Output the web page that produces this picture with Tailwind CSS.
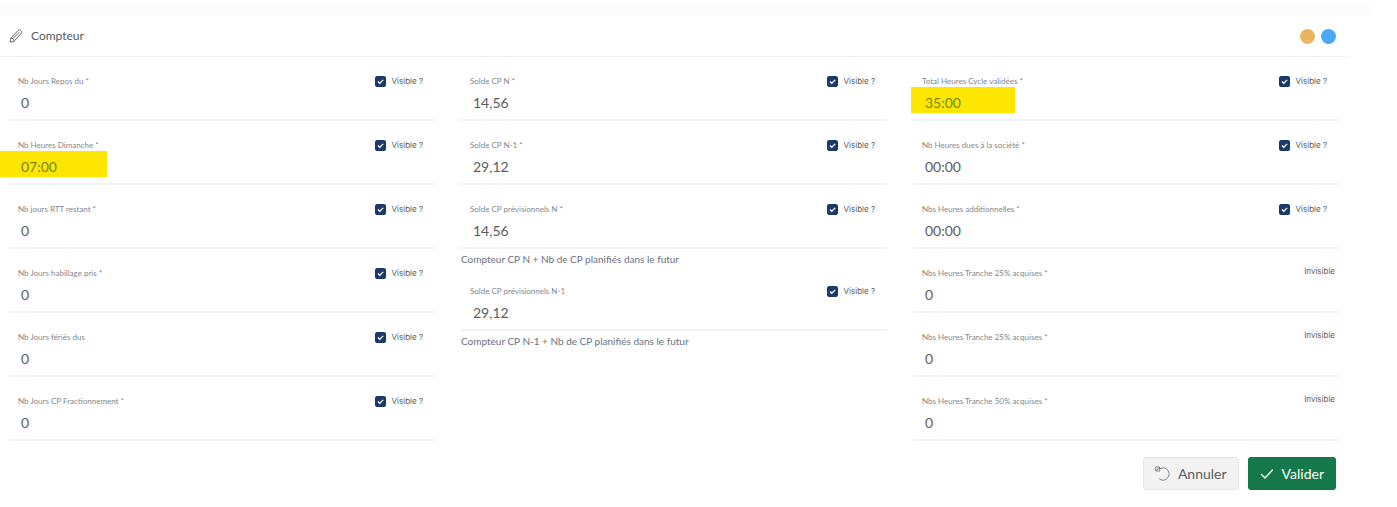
<!DOCTYPE html>
<html lang="fr">
  <head>
    <meta charset="UTF-8" />
    <meta name="viewport" content="width=device-width, initial-scale=1.0" />
    <script src="https://cdn.jsdelivr.net/npm/@tailwindcss/browser@4"></script>
    <title>Compteur</title>
  </head>

  <body class="bg-white font-['Lato',sans-serif] text-[#5a5d63]">
    <div class="mt-[5px] mr-[26px] h-[11px] bg-[#fcfcfc]"></div>

    <form class="mr-[50px]">
      <header class="flex h-[41px] items-center justify-between border-b border-[#f0f0f0] pr-[11px] pl-[9px]">
        <h1 class="flex items-center gap-2 text-[12px]">
          <svg class="size-[14px]" viewBox="0 0 14 14" fill="none" stroke="#6b6e73" stroke-linejoin="round" stroke-linecap="round">
            <path d="M1.200 12.800 2 9 9 1.600c.9-.9 2.200-.8 3 0s.9 2.100 0 3L5.200 12z M2 9c1.700 0 3.100 1.300 3.200 3 M4.200 9.400 10 3.600" />
          </svg>
          Compteur
        </h1>
        <div class="flex gap-[6px]">
          <span class="size-[15px] rounded-full bg-[#e8b563]"></span>
          <span class="size-[15px] rounded-full bg-[#4aa8f7]"></span>
        </div>
      </header>

      <div id="counters" class="grid grid-cols-3 items-start gap-[26px] pr-2 pl-[9px]"></div>

      <footer class="flex justify-end gap-[9px] pt-4 pr-[11px]">
        <button type="button" class="flex h-[33px] items-center gap-2 rounded-[3px] border border-[#e6e6e6] bg-[#f3f3f3] px-[11px] text-sm">
          <svg class="size-[15px]" viewBox="0 0 15 15" fill="none" stroke="#808388">
            <path d="M5 2.800A6 6 0 1 1 4.200 12.700" />
            <path d="M.8.800v4.200h4.200M1 1h3.500v3.500M1 5 4.500 1.200" />
          </svg>
          Annuler
        </button>
        <button type="submit" class="flex h-[33px] items-center gap-2 rounded-[3px] bg-[#15784a] px-3 text-sm text-white">
          <svg class="size-[14px]" viewBox="0 0 14 14" fill="none" stroke="currentColor" stroke-width="1.3" stroke-linecap="round" stroke-linejoin="round">
            <path d="M1.500 7.500 5 11l7.500-8" />
          </svg>
          Valider
        </button>
      </footer>
    </form>

    <script>
      const columns = [
        [
          { label: 'Nb Jours Repos du *', value: '0' },
          { label: 'Nb Heures Dimanche *', value: '07:00', mark: '-left-[9px] w-[107px]' },
          { label: 'Nb jours RTT restant *', value: '0' },
          { label: 'Nb Jours habillage pris *', value: '0' },
          { label: 'Nb Jours fériés dus', value: '0' },
          { label: 'Nb Jours CP Fractionnement *', value: '0' },
        ],
        [
          { label: 'Solde CP N *', value: '14,56' },
          { label: 'Solde CP N-1 *', value: '29,12' },
          { label: 'Solde CP prévisionnels N *', value: '14,56', help: 'Compteur CP N + Nb de CP planifiés dans le futur' },
          { label: 'Solde CP prévisionnels N-1', value: '29,12', help: 'Compteur CP N-1 + Nb de CP planifiés dans le futur' },
        ],
        [
          { label: 'Total Heures Cycle validées *', value: '35:00', mark: '-left-[2px] w-[104px]' },
          { label: 'Nb Heures dues à la société *', value: '00:00' },
          { label: 'Nbs Heures additionnelles *', value: '00:00' },
          { label: 'Nbs Heures Tranche 25% acquises *', value: '0', hidden: true },
          { label: 'Nbs Heures Tranche 25% acquises *', value: '0', hidden: true },
          { label: 'Nbs Heures Tranche 50% acquises *', value: '0', hidden: true },
        ],
      ];

      // Right side of a field: tick box, or plain text when it can't be shown
      function visibility(field) {
        if (field.hidden) {
          return '<span class="-mt-1 pr-1 font-[Inter] text-[8px] leading-4">Invisible</span>';
        }
        return `
          <label class="flex items-center gap-[6px] pr-3 font-[Inter] text-[8px] leading-4">
            <span class="relative flex size-[11px]">
              <input type="checkbox" checked class="peer size-[11px] appearance-none rounded-[2px] border border-[#1b3a6b] checked:bg-[#1b3a6b]" />
              <svg class="pointer-events-none absolute inset-0 hidden peer-checked:block" viewBox="0 0 11 11" fill="none" stroke="white" stroke-width="1.3">
                <path d="M3 5.500 4.800 7.300 8.200 3.900" />
              </svg>
            </span>
            Visible ?
          </label>`;
      }

      document.getElementById('counters').innerHTML = columns.map((fields, c) => `
        <div>
          ${fields.map((field, i) => `
            <div class="border-b-2 border-[#f1f2f3] pt-4 pb-1">
              <div class="flex h-4 items-center justify-between">
                <label for="f${c}${i}" class="pl-[9px] text-[8px] leading-4 text-[#85878b]">${field.label}</label>
                ${visibility(field)}
              </div>
              <div class="relative h-[26px]">
                ${field.mark ? `<span class="absolute -top-[2px] h-[26px] bg-[#ffe600] ${field.mark}"></span>` : ''}
                <input id="f${c}${i}" type="text" value="${field.value}" class="relative h-[26px] w-full bg-transparent pl-3 text-sm outline-none ${field.mark ? 'text-[#75870a]' : ''}" />
              </div>
            </div>
            ${field.help ? `<p class="h-[18px] pt-[2px] text-[10px] leading-4 text-[#6b7280]">${field.help}</p>` : ''}
          `).join('')}
        </div>
      `).join('');
    </script>
  </body>
</html>
